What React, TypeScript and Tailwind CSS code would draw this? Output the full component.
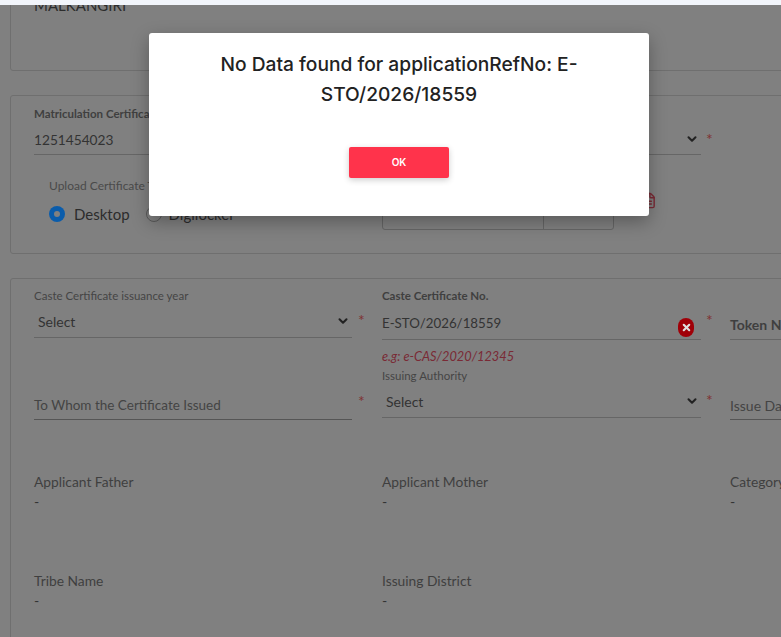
import { ChevronDown, FileText, X } from "lucide-react";

function Star({ className = "" }: { className?: string }) {
  return <span className={`text-[16px] leading-none text-[#7f3333] ${className}`}>*</span>;
}

function SelectBox({ value, className = "" }: { value: string; className?: string }) {
  return (
    <div className={`flex items-center justify-between border-b border-[#666666] pl-1 pr-[2px] pt-[2px] text-[14px] text-[#333333] ${className}`}>
      <span>{value}</span>
      <ChevronDown size={14} strokeWidth={3.5} className="text-[#222222]" />
    </div>
  );
}

function ReadOnly({ label, value }: { label: string; value: string }) {
  return (
    <div>
      <div className="text-[13.8px] leading-5 text-[#3f3f3f]">{label}</div>
      <div className="text-[14px] leading-5 text-[#333333]">{value}</div>
    </div>
  );
}

export default function App() {
  return (
    <div className="relative h-screen w-full overflow-hidden bg-[#808080] font-['Lato',sans-serif]">
      <div className="h-[5px] bg-[#f2f5fb]" />

      <div className="h-[632px] overflow-hidden">
        <div className="-mt-[40px] flex w-[1000px] flex-col gap-[24px] pl-[10px]">
          {/* address panel, top is scrolled away */}
          <div className="h-[106px] rounded-[3px] border border-[#6f6f6f] px-[23px] pt-[29px]">
            <div className="text-[15px] leading-5 text-[#2c2c2c]">MALKANGIRI</div>
          </div>

          {/* matriculation panel */}
          <div className="flex h-[159px] rounded-[3px] border border-[#6f6f6f] pl-[23px] pt-[10px]">
            <div className="w-[348px]">
              <div className="w-[318px]">
                <div className="text-[11.5px] font-bold leading-4 text-[#3f3f3f]">Matriculation Certificate</div>
                <div className="flex h-[33px] items-center border-b border-[#666666] pt-[5px] text-[13.7px] text-[#333333]">
                  1251454023
                </div>
              </div>
              <div className="pl-[15px] pt-[23px]">
                <div className="text-[12px] leading-4 text-[#4a4a4a]">Upload Certificate Type</div>
                <div className="mt-[10px] flex items-center">
                  <span className="flex size-[16px] items-center justify-center rounded-full bg-[#0a5cab]">
                    <span className="size-[6px] rounded-full bg-[#808080]" />
                  </span>
                  <span className="ml-[9px] text-[15px] leading-5 text-[#2c2c2c]">Desktop</span>
                  <span className="ml-[16px] size-[16px] rounded-full border border-[#5a5a5a]" />
                  <span className="ml-[7px] text-[15px] leading-5 text-[#2c2c2c]">Digilocker</span>
                </div>
              </div>
            </div>
            <div className="w-[400px]">
              <div className="flex w-[348px] items-start">
                <SelectBox value="Select" className="mt-[16px] h-[33px] w-[319px]" />
                <Star className="ml-[5px] mt-[25px]" />
              </div>
              <div className="mt-[40px] flex items-start">
                <div className="flex h-[35px] w-[232px] rounded-b-[3px] border border-[#666666]">
                  <div className="w-[161px] border-r border-[#666666]" />
                </div>
                <FileText size={17} strokeWidth={2} className="-mt-[3px] ml-[26px] text-[#7a2a35]" />
              </div>
            </div>
          </div>

          {/* caste certificate panel */}
          <div className="h-[500px] rounded-[3px] border border-[#6f6f6f] pl-[23px] pt-[10px]">
            <div className="flex">
              <div className="w-[348px]">
                <div className="flex items-start">
                  <div className="w-[318px]">
                    <div className="text-[11.5px] leading-[14px] text-[#454545]">Caste Certificate issuance year</div>
                    <SelectBox value="Select" className="h-[35px]" />
                  </div>
                  <Star className="ml-[6px] mt-[23px]" />
                </div>
                <div className="mt-[58px] flex items-start">
                  <div className="flex h-[24px] w-[318px] items-center border-b border-[#555555] pb-[4px] text-[13.5px] text-[#444444]">
                    To Whom the Certificate Issued
                  </div>
                  <Star className="ml-[6px] -mt-[3px]" />
                </div>
              </div>

              <div className="w-[348px]">
                <div className="flex items-start">
                  <div className="w-[319px]">
                    <div className="text-[11.5px] font-bold leading-[14px] text-[#3f3f3f]">Caste Certificate No.</div>
                    <div className="flex h-[37px] items-center justify-between border-b border-[#666666] text-[13.3px] text-[#333333]">
                      <span className="pt-[5px]">E-STO/2026/18559</span>
                      <span className="mr-[7px] mt-[12px] flex h-[19px] w-[16px] items-center justify-center rounded-full bg-[#a00008]">
                        <X size={11} strokeWidth={4.5} className="text-[#e0e0e0]" />
                      </span>
                    </div>
                  </div>
                  <Star className="ml-[5px] mt-[23px]" />
                </div>
                <div className="mt-[6px] text-[12.8px] italic leading-5 text-[#7a2a35]">e.g: e-CAS/2020/12345</div>
                <div className="mt-[3px] text-[11.5px] leading-[14px] text-[#454545]">Issuing Authority</div>
                <div className="flex items-start">
                  <SelectBox value="Select" className="h-[35px] w-[319px]" />
                  <Star className="ml-[5px] mt-[9px]" />
                </div>
              </div>

              <div>
                <div className="mt-[26px] flex h-[25px] w-[200px] items-center border-b border-[#666666] pb-[6px] text-[14px] font-bold text-[#3f3f3f]">
                  Token No
                </div>
                <div className="mt-[56px] flex h-[24px] w-[200px] items-center border-b border-[#555555] pb-[4px] text-[14px] text-[#444444]">
                  Issue Date
                </div>
              </div>
            </div>

            <div className="mt-[52px] grid grid-cols-[348px_348px_1fr] auto-rows-[99px]">
              <ReadOnly label="Applicant Father" value="-" />
              <ReadOnly label="Applicant Mother" value="-" />
              <ReadOnly label="Category" value="-" />
              <ReadOnly label="Tribe Name" value="-" />
              <ReadOnly label="Issuing District" value="-" />
            </div>
          </div>
        </div>
      </div>

      {/* alert dialog */}
      <div className="absolute left-[149px] top-[33px] flex h-[183px] w-[500px] flex-col items-center rounded-[3px] bg-white pt-[16px] shadow-[0_6px_18px_rgba(0,0,0,0.3)]">
        <h2 className="w-[400px] text-center font-['Inter',sans-serif] text-[19.2px] font-medium leading-[30px] text-[#222222]">
          No Data found for applicationRefNo: E-STO/2026/18559
        </h2>
        <button className="mt-[38px] h-[31px] w-[100px] rounded-[2px] bg-[#ff334b] font-['Inter',sans-serif] text-[10px] font-semibold text-white shadow-[0_2px_6px_rgba(0,0,0,0.2)]">
          OK
        </button>
      </div>
    </div>
  );
}
